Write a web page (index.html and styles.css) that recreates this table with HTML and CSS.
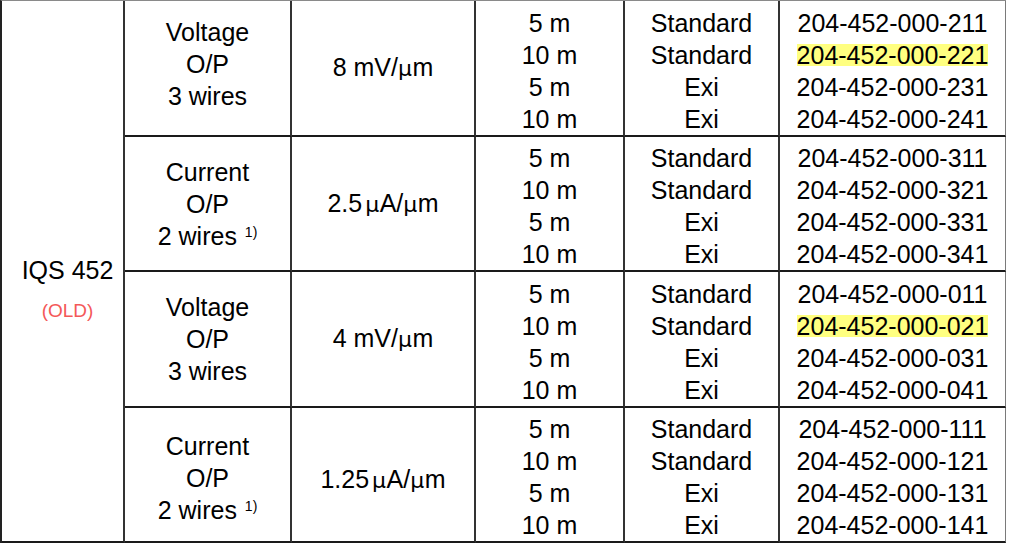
FILE: index.html
```html
<!DOCTYPE html>
<html lang="en">
<head>
<meta charset="utf-8">
<title>IQS 452 ordering table</title>
<link rel="stylesheet" href="styles.css">
</head>
<body>
<table class="spec">
  <colgroup>
    <col class="c-model">
    <col class="c-out">
    <col class="c-sens">
    <col class="c-len">
    <col class="c-type">
    <col class="c-part">
  </colgroup>
  <tbody>
    <tr class="r-a">
      <td class="model" rowspan="4">
        <div class="model-name">IQS 452</div>
        <div class="model-old">(OLD)</div>
      </td>
      <td class="out out-first">
        <div>Voltage</div><div>O/P</div><div>3 wires</div>
      </td>
      <td class="sens">8 mV/<span class="mu">μ</span>m</td>
      <td class="list"><div>5 m</div><div>10 m</div><div>5 m</div><div>10 m</div></td>
      <td class="list"><div>Standard</div><div>Standard</div><div>Exi</div><div>Exi</div></td>
      <td class="list part">
        <div>204-452-000-211</div>
        <div><span class="hl">204-452-000-221</span></div>
        <div>204-452-000-231</div>
        <div>204-452-000-241</div>
      </td>
    </tr>
    <tr class="r-b">
      <td class="out">
        <div>Current</div><div>O/P</div><div>2 wires <sup class="note">1)</sup></div>
      </td>
      <td class="sens">2.5<span class="mu mu-gap">μ</span>A/<span class="mu">μ</span>m</td>
      <td class="list"><div>5 m</div><div>10 m</div><div>5 m</div><div>10 m</div></td>
      <td class="list"><div>Standard</div><div>Standard</div><div>Exi</div><div>Exi</div></td>
      <td class="list part">
        <div>204-452-000-311</div>
        <div>204-452-000-321</div>
        <div>204-452-000-331</div>
        <div>204-452-000-341</div>
      </td>
    </tr>
    <tr class="r-a">
      <td class="out">
        <div>Voltage</div><div>O/P</div><div>3 wires</div>
      </td>
      <td class="sens">4 mV/<span class="mu">μ</span>m</td>
      <td class="list"><div>5 m</div><div>10 m</div><div>5 m</div><div>10 m</div></td>
      <td class="list"><div>Standard</div><div>Standard</div><div>Exi</div><div>Exi</div></td>
      <td class="list part">
        <div>204-452-000-011</div>
        <div><span class="hl">204-452-000-021</span></div>
        <div>204-452-000-031</div>
        <div>204-452-000-041</div>
      </td>
    </tr>
    <tr class="r-b">
      <td class="out out-last">
        <div>Current</div><div>O/P</div><div>2 wires <sup class="note">1)</sup></div>
      </td>
      <td class="sens sens-last">1.25<span class="mu mu-gap">μ</span>A/<span class="mu">μ</span>m</td>
      <td class="list"><div>5 m</div><div>10 m</div><div>5 m</div><div>10 m</div></td>
      <td class="list"><div>Standard</div><div>Standard</div><div>Exi</div><div>Exi</div></td>
      <td class="list part">
        <div>204-452-000-111</div>
        <div>204-452-000-121</div>
        <div>204-452-000-131</div>
        <div>204-452-000-141</div>
      </td>
    </tr>
  </tbody>
</table>
</body>
</html>
```

FILE: styles.css
```css
html, body {
  margin: 0;
  padding: 0;
  background: #ffffff;
}

body {
  font-family: "Liberation Sans", Arial, sans-serif;
  font-size: 25px;
  color: #000000;
  overflow: hidden;
}

.spec {
  border-collapse: separate;
  border-spacing: 0;
  table-layout: fixed;
  width: 1006px;
  border-left: 2px solid #222222;
  border-top: 1px solid #8a8a8a;
}

.c-model { width: 123px; }
.c-out   { width: 167px; }
.c-sens  { width: 184px; }
.c-len   { width: 149px; }
.c-type  { width: 155px; }
.c-part  { width: 226px; }

.spec td {
  padding: 0;
  text-align: center;
  vertical-align: middle;
  line-height: 32px;
  border-right: 2px solid #333333;
  border-bottom: 2px solid #1a1a1a;
  white-space: nowrap;
}

.spec td.part {
  border-right: 1px solid #7a7a7a;
}

/* model column */
.spec td.model {
  padding-top: 47px;
  padding-left: 10px;
}

.model-name {
  line-height: 32px;
}

.model-old {
  font-size: 19px;
  line-height: 50px;
  color: #f45858;
}

/* four-line list cells define the row height */
.spec td.list {
  vertical-align: top;
}

.r-a td.list { padding-top: 6px; }
.r-b td.list { padding-top: 5px; }

.spec td.out-first { padding-bottom: 8px; }
.spec td.out-last  { padding-top: 6px; }
.spec td.sens-last { padding-top: 10px; }

.mu {
  font-family: "DejaVu Sans", "Liberation Sans", sans-serif;
  font-size: 22px;
  letter-spacing: 0.5px;
}

.mu-gap {
  margin-left: 3px;
}

.note {
  font-size: 14px;
  line-height: 0;
  vertical-align: 8px;
  margin-left: 1px;
}

.hl {
  display: inline-block;
  height: 22px;
  line-height: 22px;
  background: #ffff80;
  vertical-align: baseline;
}
```
